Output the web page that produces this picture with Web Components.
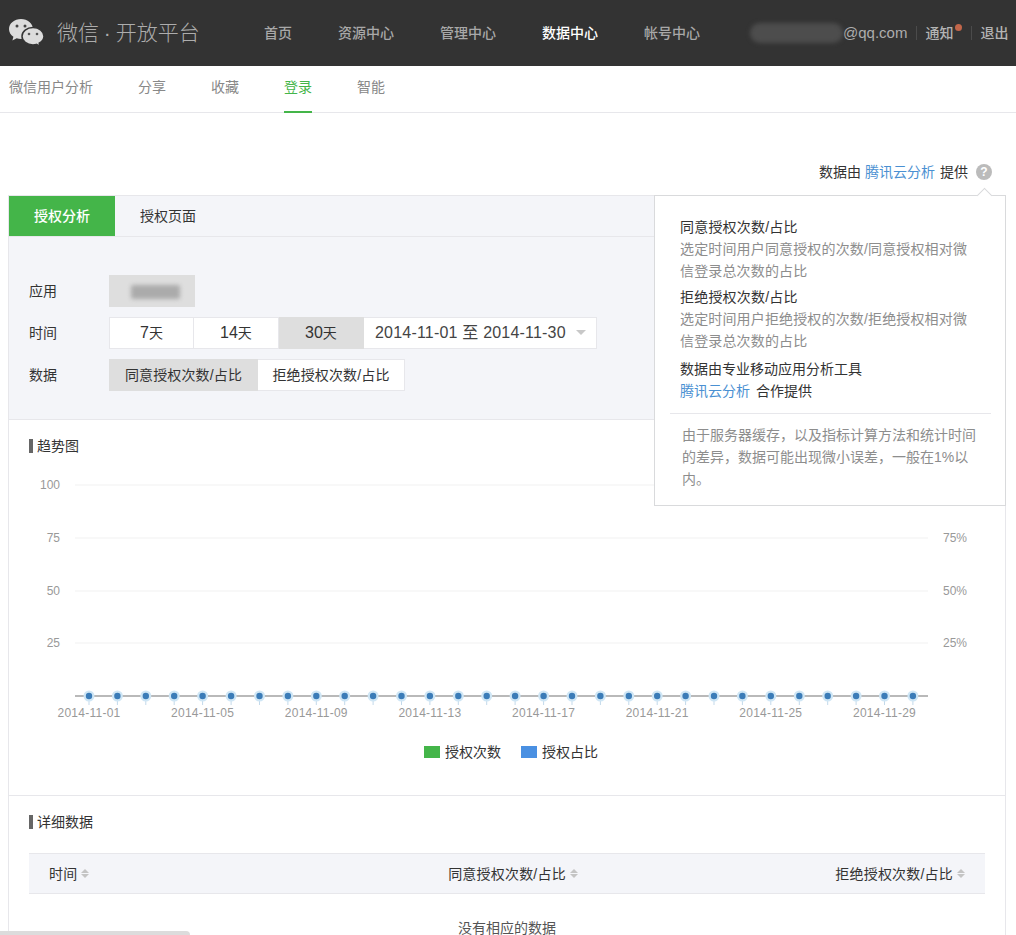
<!DOCTYPE html>
<html lang="zh">
<head>
<meta charset="utf-8">
<title>微信开放平台</title>
<style>
    html, body { margin: 0; height: 935px; overflow: hidden; background: #fff; }
    body { font: 14px/22px "Liberation Sans", "Noto Sans CJK SC", sans-serif; color: #333; position: relative; }
</style>
</head>
<body>
<wx-header></wx-header>
<wx-subnav></wx-subnav>
<wx-provider></wx-provider>
<wx-panel>
    <wx-tabs></wx-tabs>
    <wx-filter></wx-filter>
    <wx-chart></wx-chart>
    <wx-table></wx-table>
</wx-panel>
<wx-tooltip></wx-tooltip>
<wx-scrollthumb></wx-scrollthumb>

<script>
class WxBase extends HTMLElement
{
    constructor()
    {
        super();
        this.attachShadow({mode: "open"});
    }

    connectedCallback()
    {
        this.shadowRoot.innerHTML = `<style>${this.getStyles()}</style>${this.getMarkup()}`;
    }
}

class WxHeader extends WxBase
{
    getStyles()
    {
        return `
        :host{ display: flex; align-items: center; height: 66px; background: #333; color: #b4b4b4; white-space: nowrap; }
        svg{ margin-left: 9px; flex: none; }
        .title{ margin-left: 13px; width: 207px; font-size: 21px; font-weight: 300; color: #adadad; word-spacing: -1px; }
        nav{ display: flex; gap: 46px; font-weight: 500; font-size: 14px; color: #a8a8a8; }
        nav .on{ color: #fff; }
        .user{ display: flex; align-items: center; margin-left: 50px; font-size: 14px; position: relative; }
        .blur{ width: 93px; height: 20px; background: #4d4d4d; border-radius: 10px; filter: blur(2px); }
        .mail{ font-size: 15px; color: #adadad; margin-right: 1px; }
        .sep{ width: 1px; height: 14px; background: #4b4b4b; margin: 0 8px; }
        .notice{ position: relative; margin-right: 10px; font-weight: 500; }
        .notice i{ position: absolute; right: -9px; top: 2px; width: 7px; height: 7px; border-radius: 50%; background: #c2664a; }
        .out{ font-weight: 500; }
        `;
    }

    getMarkup()
    {
        return `
        <svg width="35" height="30" viewBox="0 0 35 30">
            <path d="M12 1C5.4 1 0 5.4 0 11c0 3.2 1.7 5.9 4.4 7.8L3.4 22.6l4.3-2.4c1.3.4 2.8.7 4.3.7 6.6 0 12-4.500 12-9.900S18.600 1 12 1z" fill="#dcdcdc"/>
            <path d="M24 9.500c-6.200 0-11 3.900-11 8.700s4.800 8.700 11 8.700c1.200 0 2.400-.2 3.500-.5l3.600 2.100-.9-3.300c2.900-1.600 4.800-4.100 4.800-7 0-4.800-4.800-8.700-11-8.700z" fill="#dcdcdc" stroke="#333" stroke-width="1.500"/>
            <circle cx="8" cy="8" r="1.500" fill="#444"/><circle cx="16" cy="8" r="1.500" fill="#444"/>
            <circle cx="20" cy="16" r="1.300" fill="#555"/><circle cx="28" cy="16" r="1.300" fill="#555"/>
        </svg>
        <div class="title">微信 · 开放平台</div>
        <nav><span>首页</span><span>资源中心</span><span>管理中心</span><span class="on">数据中心</span><span>帐号中心</span></nav>
        <div class="user">
            <div class="blur"></div><span class="mail">@qq.com</span>
            <span class="sep"></span><span class="notice">通知<i></i></span>
            <span class="sep"></span><span class="out">退出</span>
        </div>
        `;
    }
}

class WxSubnav extends WxBase
{
    getStyles()
    {
        return `
        :host{ display: flex; gap: 45px; height: 46px; padding-left: 9px; border-bottom: 1px solid #e7e7eb; color: #888; box-sizing: content-box; }
        span{ display: block; line-height: 43px; height: 45px; box-sizing: border-box; }
        span:first-child{ margin-right: -1px; }
        .on{ color: #44b549; border-bottom: 2px solid #44b549; height: 47px; padding-top: 0; line-height: 43px; }
        `;
    }

    getMarkup()
    {
        return `<span>微信用户分析</span><span>分享</span><span>收藏</span><span class="on">登录</span><span>智能</span>`;
    }
}

class WxProvider extends WxBase
{
    getStyles()
    {
        return `
        :host{ display: flex; justify-content: flex-end; align-items: center; height: 82px; padding: 35px 24px 0 0; box-sizing: border-box; color: #333; }
        a{ color: #4a90d2; margin: 0 5px 0 4px; }
        i{ display: block; width: 16px; height: 16px; margin-left: 8px; border-radius: 50%; background: #bbb; color: #fff; font: 700 12px/16px "Liberation Sans", sans-serif; text-align: center; }
        `;
    }

    getMarkup()
    {
        return `<span>数据由</span><a>腾讯云分析</a><span>提供</span><i>?</i>`;
    }
}

class WxPanel extends WxBase
{
    getStyles()
    {
        return `:host{ display: block; margin: 0 10px 0 8px; border: 1px solid #e7e7eb; }`;
    }

    getMarkup()
    {
        return `<slot></slot>`;
    }
}

class WxTabs extends WxBase
{
    getStyles()
    {
        return `
        :host{ display: flex; height: 41px; background: #f4f5f9; border-bottom: 1px solid #e7e7eb; box-sizing: border-box; }
        span{ width: 106px; height: 40px; line-height: 40px; text-align: center; }
        .on{ background: #44b549; color: #fff; font-weight: 500; }
        `;
    }

    getMarkup()
    {
        return `<span class="on">授权分析</span><span>授权页面</span>`;
    }
}

class WxFilter extends WxBase
{
    getStyles()
    {
        return `
        :host{ display: grid; grid-template-columns: 80px auto; justify-content: start; align-content: start; align-items: center; row-gap: 10px; height: 183px; padding: 38px 20px 0; box-sizing: border-box; background: #f4f5f9; border-bottom: 1px solid #e7e7eb; }
        .row{ display: flex; height: 32px; }
        .row span{ display: block; box-sizing: border-box; height: 32px; line-height: 30px; text-align: center; background: #fff; border: 1px solid #e7e7eb; border-left-width: 0; letter-spacing: .15px; }
        .row span:first-child{ border-left-width: 1px; }
        .row .on{ background: #dedede; border-color: #dedede; }
        .row em{ font-style: normal; font-size: 16px; letter-spacing: 0; }
        .app{ width: 86px; background: #dedede; position: relative; }
        .app::after{ content: ""; position: absolute; left: 22px; top: 10px; width: 49px; height: 14px; background: #ababab; filter: blur(2px); border-radius: 2px; }
        .w85{ width: 85px; }
        .row .date{ width: 233px; position: relative; text-align: left; padding-left: 11px; font-size: 16px; letter-spacing: .2px; color: #444; }
        .date::after{ content: ""; position: absolute; right: 10px; top: 12px; border: 5px solid transparent; border-top-color: #c8c8c8; border-bottom-width: 0; }
        `;
    }

    getMarkup()
    {
        return `
        <div>应用</div><div class="row"><div class="app"></div></div>
        <div>时间</div>
        <div class="row">
            <span class="w85"><em>7</em>天</span><span class="w85"><em>14</em>天</span><span class="w85 on"><em>30</em>天</span>
            <span class="date">2014-11-01 至 2014-11-30</span>
        </div>
        <div>数据</div>
        <div class="row">
            <span class="on" style="width:149px">同意授权次数/占比</span><span style="width:147px">拒绝授权次数/占比</span>
        </div>
        `;
    }
}

class WxHeading extends WxBase
{
    getStyles()
    {
        return `
        :host{ display: flex; align-items: center; gap: 4px; height: 22px; }
        :host::before{ content: ""; width: 4px; height: 14px; background: #666; }
        `;
    }

    getMarkup()
    {
        return `<slot></slot>`;
    }
}

class WxChart extends WxBase
{
    getStyles()
    {
        return `
        :host{ display: block; height: 376px; border-bottom: 1px solid #e7e7eb; box-sizing: border-box; }
        wx-heading{ padding: 15px 0 0 20px; }
        svg{ display: block; margin-top: 10px; }
        text{ font: 12px "Liberation Sans", sans-serif; fill: #999; }
        .legend{ display: flex; justify-content: center; align-items: center; padding-left: 8px; height: 22px; margin-top: 12px; }
        .legend i{ width: 16px; height: 12px; margin-right: 5px; }
        .legend span{ margin-right: 20px; }
        .legend span:last-child{ margin-right: 0; }
        `;
    }

    getMarkup()
    {
        let grid = "";
        [[484, "100", ""], [537, "75", "75%"], [590, "50", "50%"], [642, "25", "25%"]].forEach(([y, l, r]) =>
        {
            grid += `<line x1="75" x2="928" y1="${y}" y2="${y}" stroke="#f1f1f1"/>`;
            grid += `<text x="60" y="${y + 4}" text-anchor="end">${l}</text>`;
            if(r) grid += `<text x="943" y="${y + 4}">${r}</text>`;
        });

        let dots = "";
        for(let i = 0; i < 30; i++)
        {
            const x = (89 + i * 28.41).toFixed(1);
            dots += `<line x1="${x}" x2="${x}" y1="699" y2="704" stroke="#c3d9ea"/>`;
            dots += `<circle cx="${x}" cy="695" r="5.500" fill="#cfe6f5"/><circle cx="${x}" cy="695" r="3.200" fill="#3b7cb8"/>`;
            if(i % 4 === 0)
            {
                const day = String(i + 1).padStart(2, "0");
                dots += `<text x="${x}" y="716" text-anchor="middle" letter-spacing=".25">2014-11-${day}</text>`;
            }
        }

        return `
        <wx-heading>趋势图</wx-heading>
        <svg width="996" height="262" viewBox="9 466 996 262">
            ${grid}
            <line x1="75" x2="928" y1="695" y2="695" stroke="#b9b9b9" stroke-width="2"/>
            ${dots}
        </svg>
        <div class="legend">
            <i style="background:#44b549"></i><span>授权次数</span>
            <i style="background:#4a90e2"></i><span>授权占比</span>
        </div>
        `;
    }
}

class WxTable extends WxBase
{
    getStyles()
    {
        return `
        :host{ display: block; padding: 15px 20px 0; }
        .head{ display: grid; grid-template-columns: 1fr 1fr 1fr; align-items: center; height: 41px; margin-top: 20px; padding: 0 20px; box-sizing: border-box; background: #f4f5f9; border-top: 1px solid #e7e7eb; border-bottom: 1px solid #e7e7eb; letter-spacing: .2px; }
        .head div{ display: flex; align-items: center; gap: 4px; }
        .head div:nth-child(2){ justify-content: center; padding-left: 12px; }
        .head div:nth-child(3){ justify-content: flex-end; }
        .sort{ width: 0; display: block; border: 4px solid transparent; border-top: 0; border-bottom: 4px solid #c4c4c4; position: relative; margin-top: -5px; }
        .sort::after{ content: ""; position: absolute; left: -4px; top: 5px; border: 4px solid transparent; border-bottom: 0; border-top: 4px solid #c4c4c4; }
        .empty{ text-align: center; padding-top: 23px; color: #555; }
        `;
    }

    getMarkup()
    {
        return `
        <wx-heading>详细数据</wx-heading>
        <div class="head">
            <div>时间<i class="sort"></i></div>
            <div>同意授权次数/占比<i class="sort"></i></div>
            <div>拒绝授权次数/占比<i class="sort"></i></div>
        </div>
        <div class="empty">没有相应的数据</div>
        `;
    }
}

class WxTooltip extends WxBase
{
    getStyles()
    {
        return `
        :host{ display: block; position: absolute; left: 654px; top: 195px; width: 352px; height: 311px; box-sizing: border-box; background: #fff; border: 1px solid #d9dadc; padding: 20px 15px 0 25px; }
        :host::before{ content: ""; position: absolute; right: 15px; top: -6px; width: 10px; height: 10px; background: #fff; border-left: 1px solid #d9dadc; border-top: 1px solid #d9dadc; transform: rotate(45deg); }
        p{ margin: 0; }
        .title{ letter-spacing: .2px; }
        .desc{ color: #8d8d8d; width: 296px; margin-bottom: 4px; letter-spacing: .15px; }
        .desc.last{ margin-bottom: 6px; }
        a{ color: #4a90d2; margin-right: 6px; }
        hr{ border: 0; border-top: 1px solid #e7e7eb; margin: 11px 0 10px -10px; width: 321px; }
        .note{ color: #8d8d8d; width: 296px; margin-left: 2px; }
        `;
    }

    getMarkup()
    {
        return `
        <p class="title">同意授权次数/占比</p>
        <p class="desc">选定时间用户同意授权的次数/同意授权相对微信登录总次数的占比</p>
        <p class="title">拒绝授权次数/占比</p>
        <p class="desc last">选定时间用户拒绝授权的次数/拒绝授权相对微信登录总次数的占比</p>
        <p>数据由专业移动应用分析工具</p>
        <p><a>腾讯云分析</a>合作提供</p>
        <hr>
        <p class="note">由于服务器缓存&#xFF0C;以及指标计算方法和统计时间的差异&#xFF0C;数据可能出现微小误差&#xFF0C;一般在1%以内。</p>
        `;
    }
}

class WxScrollthumb extends WxBase
{
    getStyles()
    {
        return `:host{ display: block; position: absolute; left: 0; bottom: 0; width: 190px; height: 4px; background: #dcdcdc; border-radius: 0 4px 0 0; }`;
    }

    getMarkup()
    {
        return ``;
    }
}

customElements.define("wx-header", WxHeader);
customElements.define("wx-subnav", WxSubnav);
customElements.define("wx-provider", WxProvider);
customElements.define("wx-panel", WxPanel);
customElements.define("wx-tabs", WxTabs);
customElements.define("wx-filter", WxFilter);
customElements.define("wx-heading", WxHeading);
customElements.define("wx-chart", WxChart);
customElements.define("wx-table", WxTable);
customElements.define("wx-tooltip", WxTooltip);
customElements.define("wx-scrollthumb", WxScrollthumb);
</script>
</body>
</html>
